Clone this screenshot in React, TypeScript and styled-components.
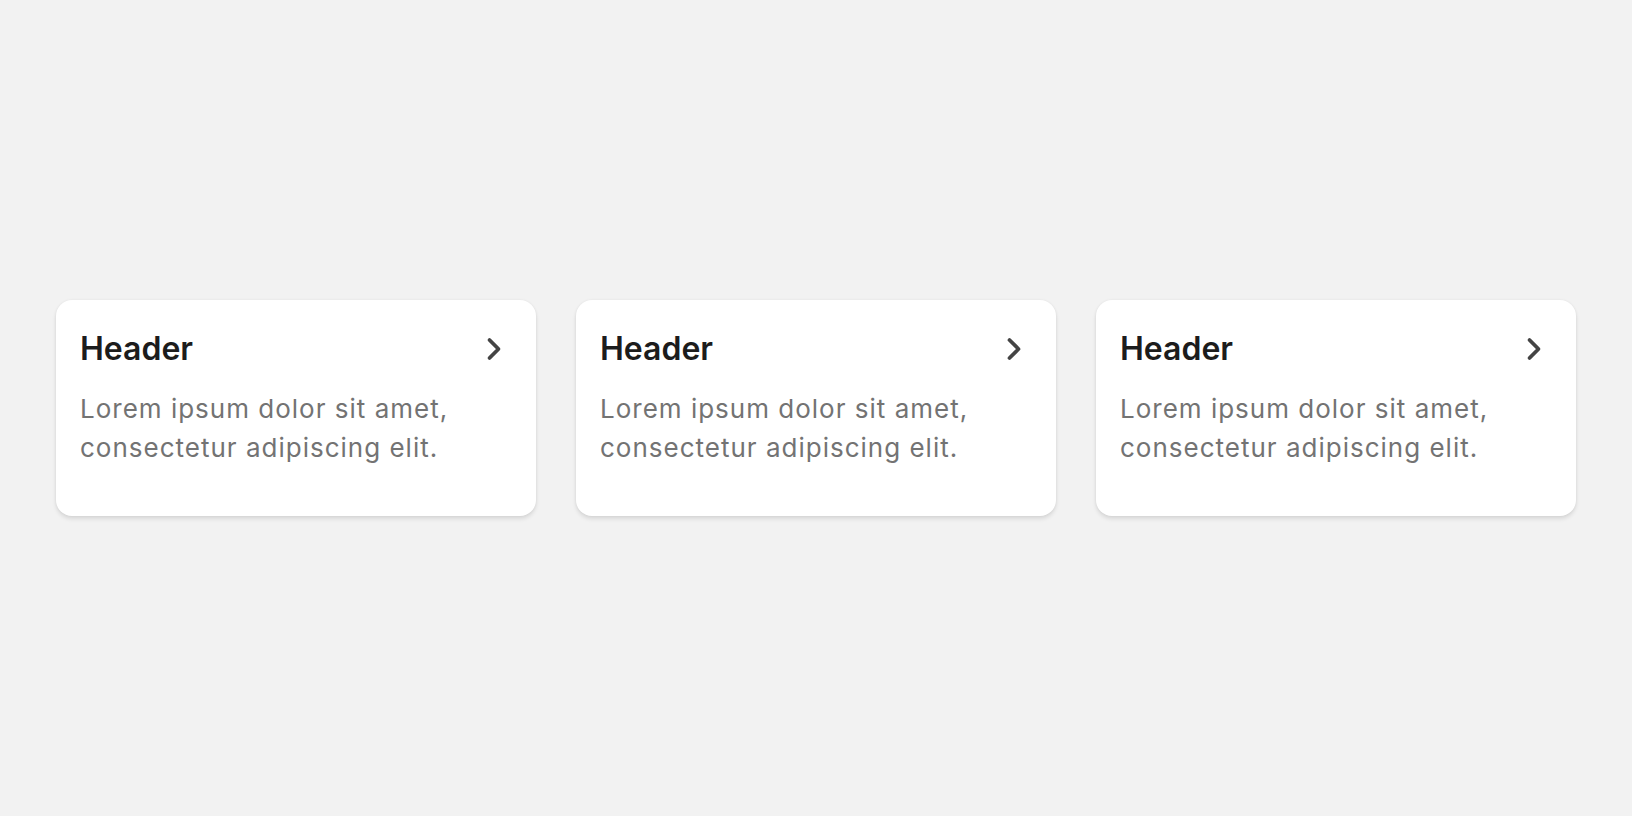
import styled, { createGlobalStyle } from 'styled-components'

const GlobalStyle = createGlobalStyle`
  html, body, #root {
    margin: 0;
    height: 100%;
  }
  body {
    background-color: #f2f2f2;
    font-family: Inter, "Noto Sans", sans-serif;
  }
`

const Page = styled.div`
  height: 100vh;
  display: flex;
  align-items: center;
  justify-content: center;
`

const CardRow = styled.div`
  display: grid;
  grid-template-columns: repeat(3, 480px);
  gap: 40px;
`

const Card = styled.div`
  height: 216px;
  box-sizing: border-box;
  padding: 25px 24px 24px;
  background-color: #ffffff;
  border-radius: 16px;
  box-shadow: 0 0 3px rgba(0, 0, 0, 0.06), 0 3px 4px rgba(0, 0, 0, 0.1);
`

const CardHeader = styled.div`
  display: flex;
  align-items: center;
  justify-content: space-between;
`

const Title = styled.h2`
  margin: 0;
  font-size: 32px;
  line-height: 48px;
  font-weight: 600;
  color: #1c1c1c;
`

const Chevron = styled.svg`
  width: 36px;
  height: 36px;
  color: #444444;
  flex-shrink: 0;
`

const Body = styled.p`
  margin: 16px 0 0;
  font-size: 26px;
  line-height: 39px;
  letter-spacing: 1px;
  color: #737373;
`

const ChevronRight = () => (
  <Chevron
    viewBox="0 0 24 24"
    fill="none"
    stroke="currentColor"
    strokeWidth={2.5}
    strokeLinecap="round"
    strokeLinejoin="round"
  >
    <path d="m9 18 6-6-6-6" />
  </Chevron>
)

const cards = [1, 2, 3]

const App = () => (
  <>
    <GlobalStyle />
    <Page>
      <CardRow>
        {cards.map((id) => (
          <Card key={id}>
            <CardHeader>
              <Title>Header</Title>
              <ChevronRight />
            </CardHeader>
            <Body>
              Lorem ipsum dolor sit amet,
              <br />
              consectetur adipiscing elit.
            </Body>
          </Card>
        ))}
      </CardRow>
    </Page>
  </>
)

export default App
